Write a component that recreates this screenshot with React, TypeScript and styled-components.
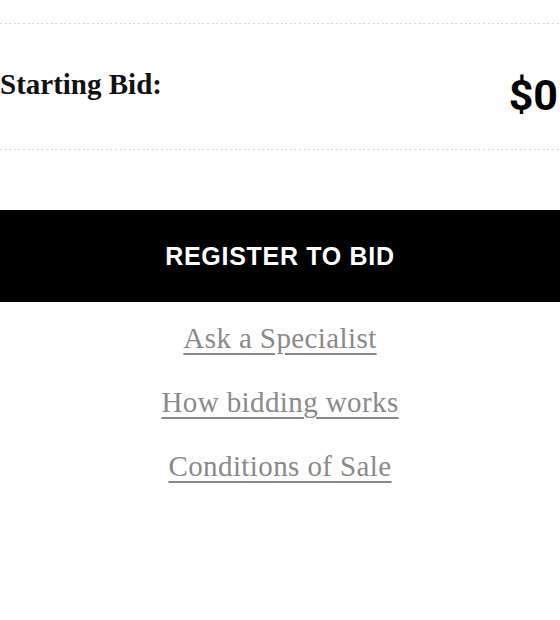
import React from "react";
import styled, { createGlobalStyle } from "styled-components";

const Global = createGlobalStyle`
  html, body {
    margin: 0;
    padding: 0;
    background: #ffffff;
    overflow: hidden;
  }
`;

const Page = styled.div`
  width: 560px;
  display: flex;
  flex-direction: column;
  padding-top: 23px;
`;

const Divider = styled.div`
  height: 1px;
  background-image: repeating-linear-gradient(
    to right,
    #d4d4d4 0,
    #d4d4d4 2px,
    transparent 2px,
    transparent 4.6px
  );
`;

const BidRow = styled.div`
  display: flex;
  align-items: flex-start;
  height: 125px;
`;

const Label = styled.div`
  font-family: "Liberation Serif", serif;
  font-weight: 700;
  font-size: 29px;
  line-height: 32px;
  color: #111;
  padding-top: 44px;
`;

const Price = styled.div`
  margin-left: auto;
  margin-right: 2px;
  font-family: Roboto, "DejaVu Sans", sans-serif;
  font-weight: 700;
  font-size: 43px;
  line-height: 44px;
  color: #000;
  padding-top: 49px;
  white-space: nowrap;
`;

const Spacer = styled.div<{ $h: number }>`
  height: ${(p) => p.$h}px;
`;

const RegisterButton = styled.button`
  display: flex;
  align-items: center;
  justify-content: center;
  width: 100%;
  height: 92px;
  border: none;
  margin: 0;
  padding: 0;
  background: #000;
  color: #fff;
  font-family: "Liberation Sans", Arial, sans-serif;
  font-weight: 700;
  font-size: 25px;
  letter-spacing: 0.7px;
  cursor: pointer;
`;

const Links = styled.div`
  display: flex;
  flex-direction: column;
  align-items: center;
  padding-top: 4px;
`;

const TextLink = styled.a`
  font-family: "Liberation Serif", serif;
  font-size: 29px;
  line-height: 64px;
  letter-spacing: 0.4px;
  color: #8a8a8a;
  text-decoration: underline;
  text-decoration-thickness: 2px;
  text-underline-offset: 5px;
  cursor: pointer;
`;

export default function App() {
  return (
    <>
      <Global />
      <Page>
        <Divider />
        <BidRow>
          <Label>Starting Bid:</Label>
          <Price>$0</Price>
        </BidRow>
        <Divider />
        <Spacer $h={60} />
        <RegisterButton>REGISTER TO BID</RegisterButton>
        <Links>
          <TextLink>Ask a Specialist</TextLink>
          <TextLink>How bidding works</TextLink>
          <TextLink>Conditions of Sale</TextLink>
        </Links>
      </Page>
    </>
  );
}
